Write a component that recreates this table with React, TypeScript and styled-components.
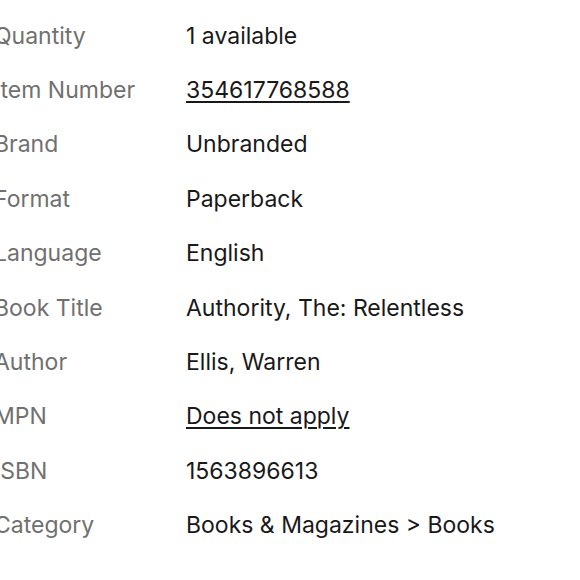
import React from 'react';
import styled, { createGlobalStyle } from 'styled-components';

const GlobalStyle = createGlobalStyle`
    html, body {
        margin: 0;
        padding: 0;
        background: #ffffff;
    }
    body {
        font-family: Inter, "Open Sans", sans-serif;
        overflow: hidden;
    }
`;

const Specs = styled.dl`
    margin: 0;
    padding: 8.5px 0 0 0;
    margin-left: -6px;
    display: grid;
    grid-template-columns: 192px 1fr;
    row-gap: 0;
`;

const Label = styled.dt`
    margin: 0;
    height: 54.4px;
    display: flex;
    align-items: center;
    font-size: 23px;
    color: #707070;
    white-space: nowrap;
    overflow: hidden;
`;

const Value = styled.dd<{ $link?: boolean }>`
    margin: 0;
    height: 54.4px;
    display: flex;
    align-items: center;
    font-size: 23px;
    color: #191919;
    white-space: nowrap;
    text-decoration: ${({ $link }) => ($link ? 'underline' : 'none')};
    text-underline-offset: 3px;
    text-decoration-thickness: 1.5px;
`;

const rows: { label: string; value: string; link?: boolean }[] = [
    { label: 'Quantity', value: '1 available' },
    { label: 'Item Number', value: '354617768588', link: true },
    { label: 'Brand', value: 'Unbranded' },
    { label: 'Format', value: 'Paperback' },
    { label: 'Language', value: 'English' },
    { label: 'Book Title', value: 'Authority, The: Relentless' },
    { label: 'Author', value: 'Ellis, Warren' },
    { label: 'MPN', value: 'Does not apply', link: true },
    { label: 'ISBN', value: '1563896613' },
    { label: 'Category', value: 'Books & Magazines > Books' },
];

const App = () => (
    <>
        <GlobalStyle />
        <Specs>
            {rows.map(row => (
                <React.Fragment key={row.label}>
                    <Label>{row.label}</Label>
                    <Value $link={row.link}>{row.value}</Value>
                </React.Fragment>
            ))}
        </Specs>
    </>
);

export default App;
